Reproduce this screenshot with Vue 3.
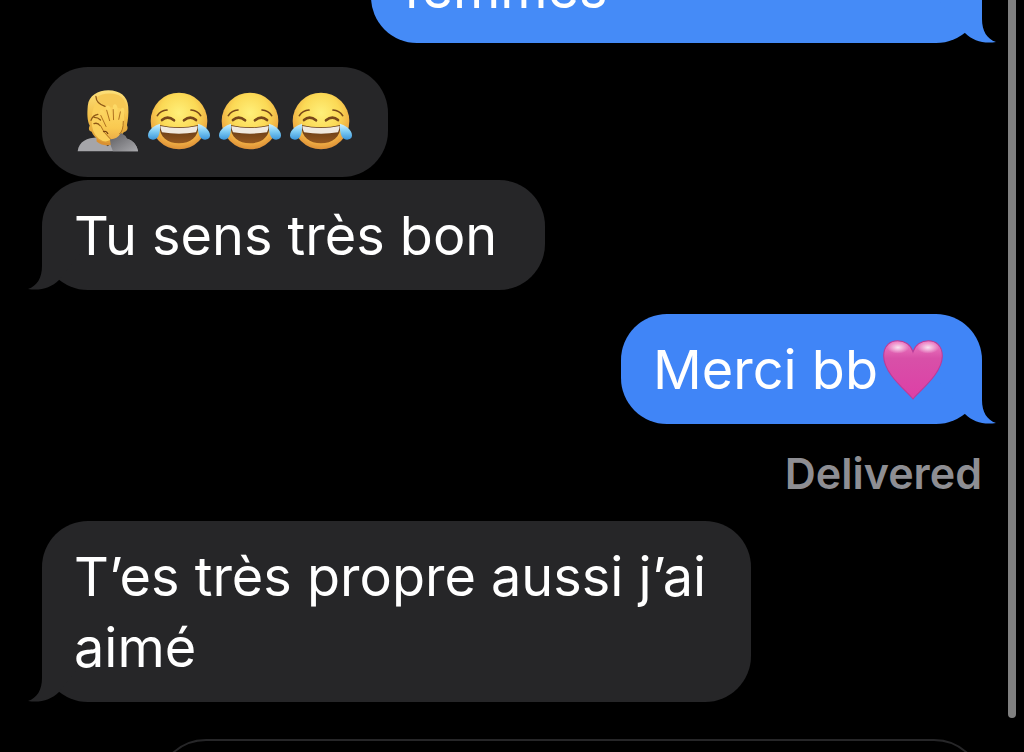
<script setup>
import { ref } from 'vue'

const draft = ref('')
const laughs = [1, 2, 3]
</script>

<template>
  <main class="chat">
    <svg class="defs" aria-hidden="true">
      <defs>
        <radialGradient id="face" cx="50%" cy="36%" r="66%">
          <stop offset="0" stop-color="#fff07a" />
          <stop offset="0.5" stop-color="#fbd955" />
          <stop offset="0.82" stop-color="#eeaa42" />
          <stop offset="1" stop-color="#d98a35" />
        </radialGradient>
        <linearGradient id="tear" x1="0" y1="0" x2="0" y2="1">
          <stop offset="0" stop-color="#d4f3ff" />
          <stop offset="0.5" stop-color="#7ccaf3" />
          <stop offset="1" stop-color="#3b95da" />
        </linearGradient>
        <linearGradient id="mouth" x1="0" y1="0" x2="0" y2="1">
          <stop offset="0" stop-color="#5c3514" />
          <stop offset="1" stop-color="#95581f" />
        </linearGradient>
        <linearGradient id="hair" x1="0" y1="0" x2="0" y2="1">
          <stop offset="0" stop-color="#fde07a" />
          <stop offset="0.5" stop-color="#f2bf48" />
          <stop offset="1" stop-color="#dc9a35" />
        </linearGradient>
        <linearGradient id="hand" x1="0" y1="0" x2="0" y2="1">
          <stop offset="0" stop-color="#fddb68" />
          <stop offset="0.6" stop-color="#f9c950" />
          <stop offset="1" stop-color="#e5a343" />
        </linearGradient>
        <linearGradient id="sleeve" x1="0" y1="0" x2="1" y2="1">
          <stop offset="0" stop-color="#5c5c60" />
          <stop offset="1" stop-color="#a9a9ad" />
        </linearGradient>
        <linearGradient id="heart" x1="0" y1="0" x2="0" y2="1">
          <stop offset="0" stop-color="#ee7cc2" />
          <stop offset="0.3" stop-color="#d850a8" />
          <stop offset="1" stop-color="#dd3fa6" />
        </linearGradient>
        <radialGradient id="shine">
          <stop offset="0" stop-color="#fff" stop-opacity="0.8" />
          <stop offset="1" stop-color="#fff" stop-opacity="0" />
        </radialGradient>
        <symbol id="laugh" viewBox="0 0 186 186">
          <circle cx="93" cy="93" r="85" fill="url(#face)" />
          <g fill="none" stroke="#78481a" stroke-linecap="round">
            <path d="M28 77Q38 61 57 60M129 60Q148 61 158 77" stroke-width="5" />
            <path d="M42 90Q59 75 78 91M108 91Q127 75 144 90" stroke-width="8" />
          </g>
          <path d="M34 105Q93 119 152 105C152 142 127 160 93 160S34 142 34 105Z" fill="url(#mouth)" />
          <path d="M37 108Q93 120 149 108Q149 118 144 127Q93 135 42 127Q37 118 37 108Z" fill="#f0e9df" />
          <path d="M36 101C22 105 0 118 0 136C0 152 24 154 31 139C36 128 37 114 36 101Z" fill="url(#tear)" />
          <path d="M150 101C164 105 186 118 186 136C186 152 162 154 155 139C150 128 149 114 150 101Z" fill="url(#tear)" />
        </symbol>
        <symbol id="tail" viewBox="0 0 60 46">
          <path d="M0 0H46V22C46 34 51 42 60 45C48 47 37 44 29 36Z" />
        </symbol>
      </defs>
    </svg>

    <section class="thread" aria-label="Messages">
      <div class="bubble sent first">
        femmes
        <svg class="tail" aria-hidden="true"><use href="#tail" /></svg>
      </div>

      <div class="bubble received emojis">
        <svg class="emoji" viewBox="0 0 186 190" role="img" aria-label="Facepalm">
          <path d="M0 188C4 157 29 147 61 145L92 172L125 145C159 147 180 160 185 188Z" fill="#a5a5a9" />
          <path d="M58 136Q91 178 112 139L111 164Q84 178 58 158Z" fill="#d99031" />
          <path d="M43 128C32 126 34 116 37 109C29 94 29 72 31 48C34 17 62 1 94 1C130 1 153 20 155 51C157 74 154 91 151 108C156 119 151 127 142 129Q126 150 108 159Q87 169 64 153Q48 142 43 128Z" fill="url(#hair)" />
          <path d="M57 38Q43 58 43 91Q42 130 64 149Q88 168 110 145Q141 122 143 89Q143 55 121 40Q86 48 57 38Z" fill="#fbd05b" />
          <path d="M57 24Q76 57 128 55Q140 60 148 84Q158 35 125 15Q83 4 57 24Z" fill="#f6c854" />
          <path d="M56 20Q57 42 84 50M41 93Q46 78 62 75M51 84Q62 84 70 92M50 103Q61 99 69 109" fill="none" stroke="#8e5816" stroke-width="4" stroke-linecap="round" />
          <path d="M102 153C88 137 74 124 68 108C65 94 77 96 87 110L70 75C64 61 74 54 82 68L95 92L87 58C86 44 98 43 101 58L109 90L108 53C108 40 120 41 122 54L125 89L132 62C134 51 144 53 143 65L139 111Q137 126 127 135L132 154L108 165Z" fill="url(#hand)" />
          <path d="M87 112L71 78M98 94L89 62M110 91L109 60M126 90L131 67M70 109Q78 130 99 149M140 96Q140 126 129 134" fill="none" stroke="#ad701f" stroke-width="3" stroke-linecap="round" />
          <path d="M78 128Q87 123 93 135" fill="none" stroke="#74410f" stroke-width="4" />
          <path d="M99 151Q119 153 133 132Q147 139 151 149Q179 157 185 188H108Q100 172 99 151Z" fill="url(#sleeve)" />
        </svg>
        <svg v-for="n in laughs" :key="n" class="emoji" role="img" aria-label="Tears of joy">
          <use href="#laugh" />
        </svg>
      </div>

      <div class="bubble received follow">
        Tu sens très bon
        <svg class="tail" aria-hidden="true"><use href="#tail" /></svg>
      </div>

      <div class="bubble sent">
        <span>Merci bb</span>
        <svg class="heart" viewBox="0 0 176 176" role="img" aria-label="Pink heart">
          <path d="M88 173C69 149 2 99 2 47C2 15 22 2 43 2C64 2 82 14 88 35C94 14 112 2 133 2C154 2 174 15 174 47C174 99 107 149 88 173Z" fill="url(#heart)" stroke="#ba3a97" stroke-width="3" />
          <ellipse cx="44" cy="22" rx="32" ry="18" fill="url(#shine)" />
          <ellipse cx="132" cy="22" rx="32" ry="18" fill="url(#shine)" />
        </svg>
        <svg class="tail" aria-hidden="true"><use href="#tail" /></svg>
      </div>
      <p class="status">Delivered</p>

      <div class="bubble received last">
        T’es très propre aussi j’ai aimé
        <svg class="tail" aria-hidden="true"><use href="#tail" /></svg>
      </div>
    </section>

    <form class="composer" @submit.prevent>
      <input v-model="draft" class="field" type="text" aria-label="Message" />
    </form>
    <div class="scrollbar" aria-hidden="true"></div>
  </main>
</template>

<style>
body {
  margin: 0;
  background: #000;
}
</style>

<style scoped>
.chat {
  position: relative;
  height: 100vh;
  overflow: hidden;
  background: #000;
  color: #fff;
  font-family: Inter, "Liberation Sans", sans-serif;
}
.defs {
  position: absolute;
  width: 0;
  height: 0;
}
.thread {
  display: flex;
  flex-direction: column;
  align-items: flex-start;
  padding: 0 42px;
}
.bubble {
  position: relative;
  isolation: isolate;
  box-sizing: border-box;
  max-width: 76%;
  margin-top: 24px;
  padding: 20px 48px 19px 32px;
  border-radius: 46px;
  font-size: 54px;
  line-height: 71px;
}
.received {
  background: #262628;
  fill: #262628;
}
.sent {
  display: flex;
  align-items: center;
  align-self: flex-end;
  padding-right: 39px;
  background: #4085f7;
  fill: #4085f7;
}
.first {
  width: 65%;
  margin-top: -67px;
  background: #458bf7;
  fill: #458bf7;
}
.follow {
  margin-top: 3px;
}
.emojis {
  display: flex;
  align-items: center;
  gap: 9px;
  height: 110px;
  padding: 0 36px 2px 35px;
}
.emoji {
  width: 62px;
  height: 62px;
}
.heart {
  width: 60px;
  height: 60px;
  margin-left: 5px;
}
.tail {
  position: absolute;
  z-index: -1;
  right: -14px;
  bottom: 0;
  width: 60px;
  height: 46px;
}
.received .tail {
  right: auto;
  left: -14px;
  transform: scaleX(-1);
}
.status {
  align-self: flex-end;
  margin: 21px 0 20px;
  color: #8e8e93;
  font-size: 43px;
  font-weight: 600;
  line-height: 56px;
}
.last {
  max-width: 709px;
  margin-top: 0;
  padding-right: 36px;
}
.composer {
  margin: 37px 40px 0 156px;
}
.field {
  display: block;
  box-sizing: border-box;
  width: 100%;
  height: 108px;
  padding: 0 36px;
  border: 2px solid #262628;
  border-radius: 50px;
  outline: none;
  background: transparent;
  color: #fff;
  font: inherit;
  font-size: 54px;
}
.scrollbar {
  position: absolute;
  top: -8px;
  right: 8px;
  bottom: 34px;
  width: 8px;
  border-radius: 4px;
  background: #808080;
}
</style>
